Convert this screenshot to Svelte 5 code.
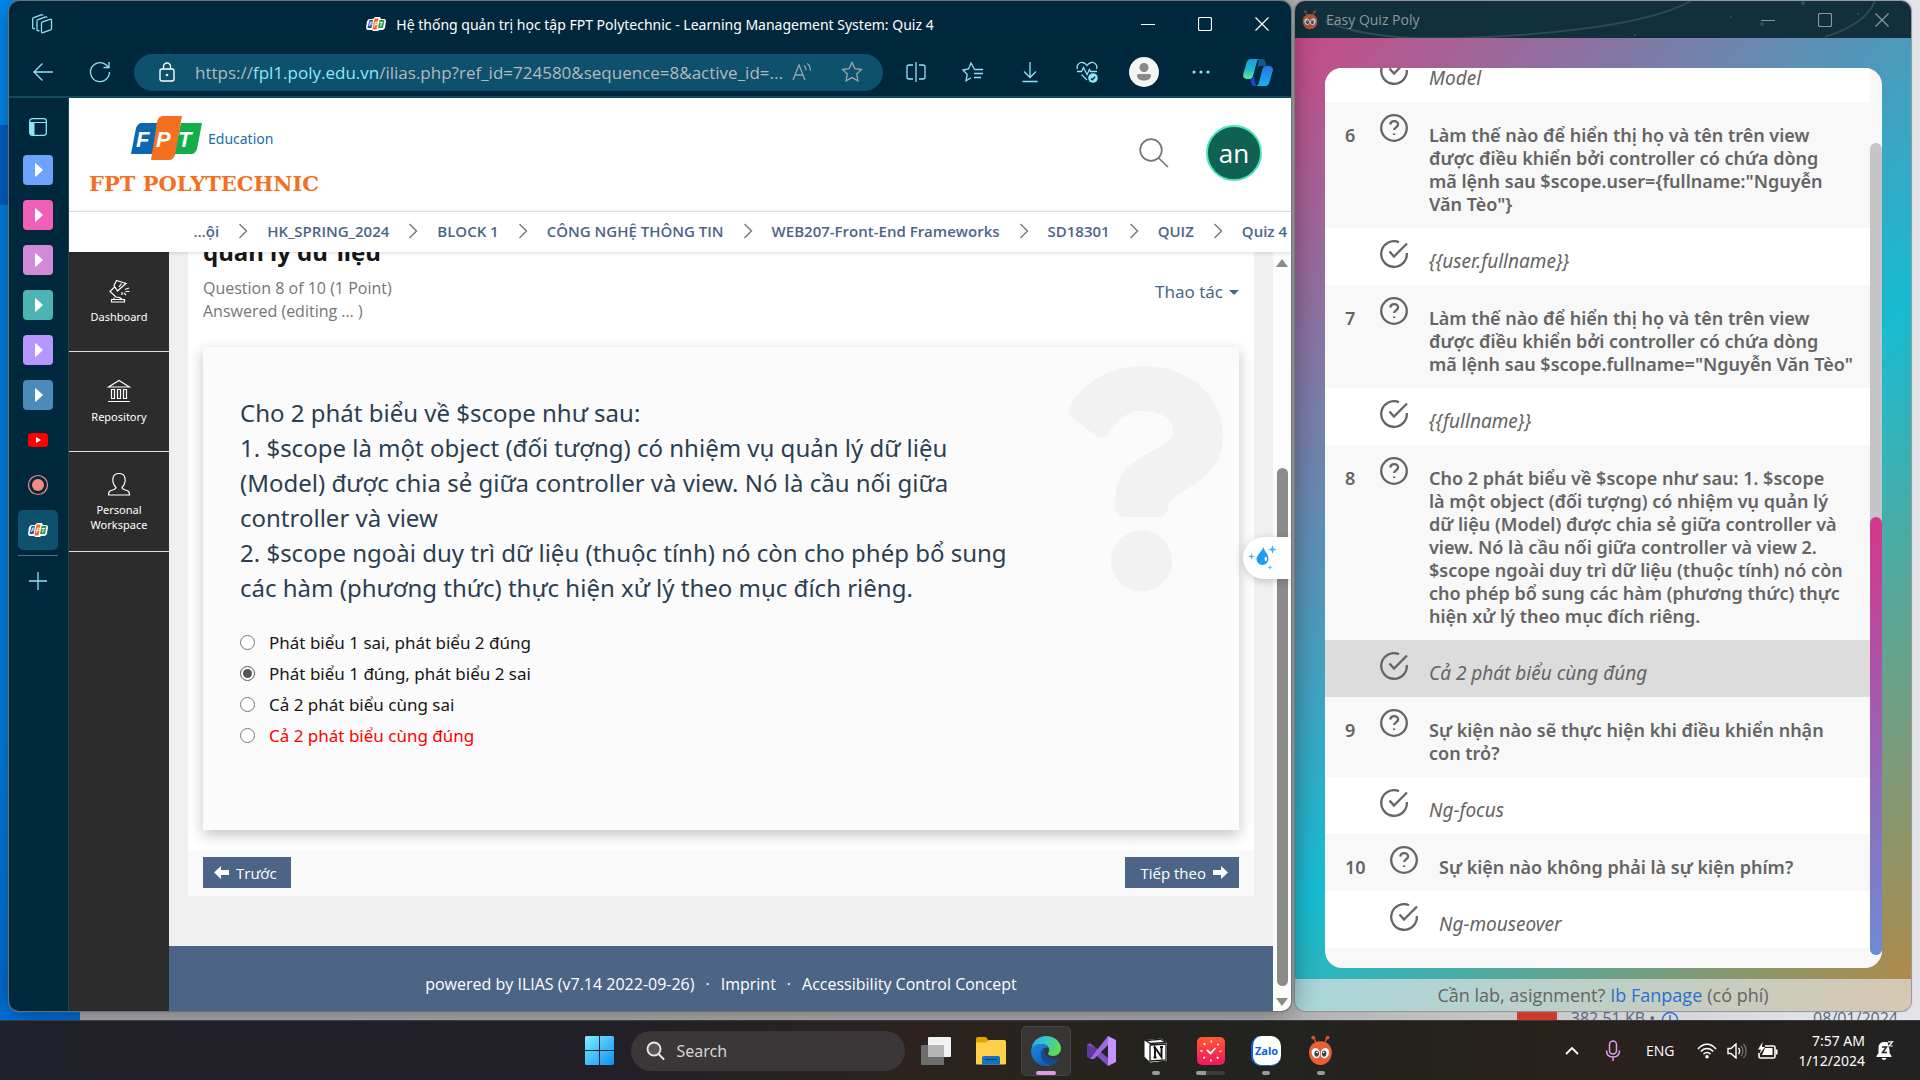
<script>
  const tiles = ['#6ea2ff', '#f060b8', '#d08ad8', '#4db4b6', '#b896ff', '#4c8abb'];
  const crumbs = ['…ội', 'HK_SPRING_2024', 'BLOCK 1', 'CÔNG NGHỆ THÔNG TIN', 'WEB207-Front-End Frameworks', 'SD18301', 'QUIZ', 'Quiz 4'];
  const options = [
    { text: 'Phát biểu 1 sai, phát biểu 2 đúng' },
    { text: 'Phát biểu 1 đúng, phát biểu 2 sai' },
    { text: 'Cả 2 phát biểu cùng sai' },
    { text: 'Cả 2 phát biểu cùng đúng', hint: true }
  ];
  let chosen = $state(1);
  const quiz = [
    { n: 5, a: 'Model' },
    { n: 6, q: 'Làm thế nào để hiển thị họ và tên trên view\nđược điều khiển bởi controller có chứa dòng\nmã lệnh sau $scope.user={fullname:"Nguyễn\nVăn Tèo"}', a: '{{user.fullname}}' },
    { n: 7, q: 'Làm thế nào để hiển thị họ và tên trên view\nđược điều khiển bởi controller có chứa dòng\nmã lệnh sau $scope.fullname="Nguyễn Văn Tèo"', a: '{{fullname}}' },
    { n: 8, q: 'Cho 2 phát biểu về $scope như sau: 1. $scope\nlà một object (đối tượng) có nhiệm vụ quản lý\ndữ liệu (Model) được chia sẻ giữa controller và\nview. Nó là cầu nối giữa controller và view 2.\n$scope ngoài duy trì dữ liệu (thuộc tính) nó còn\ncho phép bổ sung các hàm (phương thức) thực\nhiện xử lý theo mục đích riêng.', a: 'Cả 2 phát biểu cùng đúng', on: true },
    { n: 9, q: 'Sự kiện nào sẽ thực hiện khi điều khiển nhận\ncon trỏ?', a: 'Ng-focus' },
    { n: 10, q: 'Sự kiện nào không phải là sự kiện phím?', a: 'Ng-mouseover' }
  ];
</script>

{#snippet fptMini(w)}
  <svg width={w} height={w * 0.7} viewBox="0 0 20 14" aria-hidden="true">
    <path d="M3 2h4l2-2h5l1 2h4l1 2-1 7-2 2h-4l-1 1H7l-1-1H1l-1-2 1-7z" fill="#fff" />
    <path d="M3.500 3H7l-1.500 8H1.500z" fill="#1f4fa5" />
    <path d="M8.500 1.500h4l-2 11h-4z" fill="#f26b21" />
    <path d="M13.500 3h5L17 11h-5z" fill="#2b9c46" />
    <path d="M3.500 9 4.500 5h2M4 7h2M8.500 9.500l1-4.500h2l-.5 2.500H9M13.500 5.500h3.500M15.500 5.500l-.8 4" fill="none" stroke="#fff" stroke-width=".9" />
  </svg>
{/snippet}

{#snippet winButtons()}
  <div class="winbtns">
    <button aria-label="Minimize"><svg width="14" height="14" viewBox="0 0 14 14"><path d="M0 7.500h14" /></svg></button>
    <button aria-label="Maximize"><svg width="14" height="14" viewBox="0 0 14 14"><rect x=".5" y=".5" width="13" height="13" rx="1.500" /></svg></button>
    <button aria-label="Close"><svg width="14" height="14" viewBox="0 0 14 14"><path d="M.5.5l13 13M13.500.5l-13 13" /></svg></button>
  </div>
{/snippet}

{#snippet ant(h)}
  <svg width={h * 0.8} height={h} viewBox="0 0 24 30" aria-hidden="true">
    <path d="M8 9 6 3M16 9l2-6" stroke="#d8552f" stroke-width="1.400" />
    <circle cx="5" cy="2.500" r="1.800" fill="#d8552f" /><circle cx="19" cy="2.500" r="1.800" fill="#d8552f" />
    <path d="M12 6c7 0 11 5 11 11 0 7-5 12-11 12S1 24 1 17C1 11 5 6 12 6z" fill="#ea6035" />
    <ellipse cx="7.600" cy="17.500" rx="4" ry="5" fill="#fff" transform="rotate(-18 7.600 17.500)" />
    <ellipse cx="16.400" cy="17.500" rx="4" ry="5" fill="#fff" transform="rotate(18 16.400 17.500)" />
    <ellipse cx="8.400" cy="18" rx="2.200" ry="3" fill="#39424a" /><ellipse cx="15.600" cy="18" rx="2.200" ry="3" fill="#39424a" />
    <circle cx="8.800" cy="16.800" r=".9" fill="#fff" /><circle cx="15" cy="16.800" r=".9" fill="#fff" />
  </svg>
{/snippet}

<div class="desktop">
  <div class="behind" aria-hidden="true">
    <div class="blue"></div>
    <div class="chat"><i class="file"></i><span>382.51 KB • <svg width="18" height="18" viewBox="0 0 18 18"><circle cx="9" cy="9" r="7.500" fill="none" stroke="#2f6fd0" stroke-width="1.500" /><path d="M9 4v5l3 2" fill="none" stroke="#2f6fd0" stroke-width="1.500" /></svg></span><span class="date">08/01/2024</span></div>
  </div>

  <div class="stage">
    <section class="browser">
      <header class="chrome">
        <div class="titlebar">
          <button class="ws" aria-label="Workspaces">
            <svg width="22" height="22" viewBox="0 0 22 22"><path d="M10.500 10.200q0-1 1-1.400l7.500-2.500q1.500-.4 1.500 1v8.200q0 1-1 1.400l-7.500 2.800q-1.500.5-1.500-1zM8.500 17.500l-1.500.3q-1 .1-1-1V8q0-1 1-1.400l7.500-2.700q1.200-.3 1.500.8M4 15.500l-1 .1q-1.300.1-1.300-1V6q0-1 1-1.400l7.500-2.800Q11.800 1.400 12 2.500" /></svg>
          </button>
          <div class="wintitle">{@render fptMini(20)}<span>Hệ thống quản trị học tập FPT Polytechnic - Learning Management System: Quiz 4</span></div>
          {@render winButtons()}
        </div>
        <div class="toolbar">
          <button class="tool" aria-label="Back"><svg width="22" height="20" viewBox="0 0 22 20"><path d="M21 10H2M10.500 1.500 2 10l8.500 8.500" /></svg></button>
          <button class="tool" aria-label="Refresh"><svg width="22" height="22" viewBox="0 0 22 22"><path d="M20.500 11a9.500 9.500 0 1 1-3.500-7.300L19.500 6M20 1v5.500h-5.500" /></svg></button>
          <div class="address">
            <svg width="16" height="20" viewBox="0 0 16 20"><rect x="1" y="7" width="14" height="12" rx="2" fill="none" stroke="#fff" stroke-width="1.400" /><path d="M4.500 7V4.500a3.500 3.500 0 0 1 7 0V7" fill="none" stroke="#fff" stroke-width="1.400" /><circle cx="8" cy="13" r="1.300" fill="#fff" /></svg>
            <span class="url">https://<b>fpl1.poly.edu.vn</b>/ilias.php?ref_id=724580&amp;sequence=8&amp;active_id=...</span>
            <button aria-label="Read aloud"><svg width="20" height="20" viewBox="0 0 20 20"><path d="M1 18 7 3l6 15M3 13h8M12 3.500c1.500 1 2 3 2 5M15 1.500c2.500 1.500 3.500 4.500 3.500 7" /></svg></button>
            <button aria-label="Favourite"><svg width="22" height="22" viewBox="0 0 22 22"><path d="m11 1.500 2.900 6.100 6.600.9-4.800 4.600 1.200 6.700L11 16.600l-5.900 3.200 1.200-6.700L1.500 8.500l6.600-.9z" /></svg></button>
          </div>
          <button class="tool" aria-label="Split screen"><svg width="20" height="20" viewBox="0 0 20 20"><path d="M7 3H3a2 2 0 0 0-2 2v10a2 2 0 0 0 2 2h4M13 3h4a2 2 0 0 1 2 2v10a2 2 0 0 1-2 2h-4M10 0v20" /></svg></button>
          <button class="tool" aria-label="Favourites"><svg width="22" height="20" viewBox="0 0 22 20"><path d="M12.500 7.500 9 1 6.500 7 1 8l4.200 4.400L4 18.800l5-3M12.500 7.500H21M12 11.500h9M12 15.500h7" /></svg></button>
          <button class="tool" aria-label="Downloads"><svg width="20" height="22" viewBox="0 0 20 22"><path d="M10 1v15M4 10.500l6 6 6-6M2.500 20.500h15" /></svg></button>
          <button class="tool" aria-label="Browser essentials"><svg width="22" height="22" viewBox="0 0 22 22"><path d="M1.500 8C0 4 3.500 1.200 6.500 1.500 9 1.700 10 3 11 4.500c1-1.500 2-2.800 4.500-3C18.500 1.200 22 4 20.500 8M1 10.500h4.500l2-4 3.500 7 2.500-5 1 2H21M5.500 13.500l5.500 5.500" /><circle cx="17" cy="17" r="4.800" class="solid" /><path d="m15 17.500 1.300 1.300 2.700-3" class="cut" /></svg></button>
          <button class="tool" aria-label="Profile"><svg width="30" height="30" viewBox="0 0 30 30" class="prof"><circle cx="15" cy="15" r="15" fill="#f5f5f5" /><circle cx="15" cy="10.500" r="4.500" fill="#8a8886" /><path d="M9.500 17h11q1.500 0 1.500 1.500c0 3.500-3 5-7 5s-7-1.500-7-5Q8 17 9.500 17z" fill="#8a8886" /></svg></button>
          <button class="tool" aria-label="Settings and more"><svg width="18" height="4" viewBox="0 0 18 4"><circle cx="2" cy="2" r="1.600" class="solid" /><circle cx="9" cy="2" r="1.600" class="solid" /><circle cx="16" cy="2" r="1.600" class="solid" /></svg></button>
          <button class="tool copilot" aria-label="Copilot">
            <svg width="30" height="27" viewBox="0 0 30 27">
              <defs><linearGradient id="cpa" x1="0" y1="0" x2="0" y2="1"><stop offset="0" stop-color="#139ddd" /><stop offset=".5" stop-color="#22b6d8" /><stop offset="1" stop-color="#62e88e" /></linearGradient><linearGradient id="cpb" x1="0" y1="1" x2="0" y2="0"><stop offset="0" stop-color="#14b4f8" /><stop offset="1" stop-color="#2c6fe0" /></linearGradient></defs>
              <path d="M16 0h3c2 0 3 1 3.500 3l1 4H18c-2 0-3 1-3.500 3z" fill="#0b5c94" />
              <path d="M8 0h9c-2 0-3 2-3.500 4L10 17c-.6 2-1.500 3-3.500 3H4c-3 0-4.500-2-3.700-5L3.500 4C4.200 1.500 5.500 0 8 0z" fill="url(#cpa)" />
              <path d="M13 27h-2c-1.500 0-2.300-1-2.700-2.500L7.500 20c2-.3 3-1.500 3.500-3.500z" fill="#1a44d8" />
              <path d="M22 27h-9.500c2 0 3-1.500 3.500-3.500L19.500 10c.6-2 1.500-3 3.500-3h3c3 0 4.500 2 3.700 5L26.500 23c-.7 2.500-2 4-4.500 4z" fill="url(#cpb)" />
            </svg>
          </button>
        </div>
      </header>

      <div class="under">
        <nav class="tabs" aria-label="Tabs">
          <button class="slot first" aria-label="Tab actions"><svg width="18" height="18" viewBox="0 0 18 18"><rect x=".7" y=".7" width="16.600" height="16.600" rx="2.500" fill="none" stroke="#8fe3fa" stroke-width="1.300" /><path d="M1 4.500h16" stroke="#8fe3fa" stroke-width="1.200" /><path d="M1 5h4.500v12H2.500L1 15.500z" fill="#8fe3fa" /></svg></button>
          {#each tiles as c}
            <button class="slot" aria-label="Pinned tab"><svg width="30" height="30" viewBox="0 0 30 30"><rect width="30" height="30" rx="4" fill={c} /><path d="M13 8.500c-.6-.6-1-.3-1 .5v12c0 .8.4 1.100 1 .5l6.500-6c.6-.5.600-.5 0-1z" fill="#fff" /></svg></button>
          {/each}
          <button class="slot" aria-label="YouTube"><svg width="20" height="14" viewBox="0 0 20 14"><rect width="20" height="14" rx="3.500" fill="#f00" /><path d="M8 4v6l5-3z" fill="#fff" /></svg></button>
          <button class="slot" aria-label="Recorder"><svg width="22" height="22" viewBox="0 0 22 22"><circle cx="11" cy="11" r="9.500" fill="none" stroke="#f28b82" stroke-width="1.200" /><circle cx="11" cy="11" r="6" fill="#f28b82" /></svg></button>
          <button class="slot current" aria-label="Quiz 4">{@render fptMini(20)}</button>
          <hr />
          <button class="slot" aria-label="New tab"><svg width="18" height="18" viewBox="0 0 18 18"><path d="M9 0v18M0 9h18" stroke="#8fe3fa" stroke-width="1.300" /></svg></button>
        </nav>

        <div class="page">
          <header class="sitehead">
            <a href="#home" class="logo">
              <span class="logotop">
                <svg width="72" height="46" viewBox="0 0 72 46" aria-hidden="true">
                  <path d="M11 7h17l-6 31H0L5 12c1-3 3-5 6-5z" fill="#0b67b2" />
                  <path d="M50 7h21l-5 26c-1 3-3 5-6 5H43z" fill="#12ae4b" />
                  <path d="M32 0h19l-7 39c-1 3-3 5-6 5H20l6-38c1-4 3-6 6-6z" fill="#f37021" />
                  <text x="5" y="31">F</text><text x="25" y="31">P</text><text x="47" y="31">T</text>
                </svg>
                <span class="edu">Education</span>
              </span>
              <strong>FPT POLYTECHNIC</strong>
            </a>
            <button class="find" aria-label="Search"><svg width="30" height="30" viewBox="0 0 30 30"><circle cx="12" cy="12" r="10.800" fill="none" stroke="#757575" stroke-width="1.700" /><path d="m19.500 20 9.500 9" stroke="#757575" stroke-width="1.700" /></svg></button>
            <button class="me">an</button>
          </header>
          <nav class="crumbs" aria-label="Breadcrumb">
            {#each crumbs as c, i}
              {#if i}<svg width="10" height="16" viewBox="0 0 10 16" aria-hidden="true"><path d="m1.500 1 7 7-7 7" fill="none" stroke="#777" stroke-width="1.400" /></svg>{/if}
              <a href="#crumb">{c}</a>
            {/each}
          </nav>

          <div class="body">
            <nav class="side" aria-label="Main">
              <a href="#dashboard"><svg width="24" height="24" viewBox="0 0 24 24"><path d="M4.500 20.500h13v2.500h-13zM7 20.500v-2M15 20.500C14 18 11.500 18.500 9 18L3 12.500 8 7.500M9.500 1.500 19 4.500l-3.500 3-5 4.500-3.500-5.500zM12 8l2.500-3.500M15 16v-3M19 16l-2-2M18 10.500l4-1.500M18.500 12.500h4" /></svg><span>Dashboard</span></a>
              <a href="#repository"><svg width="24" height="24" viewBox="0 0 24 24"><path d="M1.500 8 12 1.500 22.500 8zM4.500 10.500h3v9h-3zM10.500 10.500h3v9h-3zM16.500 10.500h3v9h-3zM1 22.500h22" /></svg><span>Repository</span></a>
              <a href="#workspace"><svg width="24" height="24" viewBox="0 0 24 24"><path d="M9 15.500C6.500 13 5.500 9.500 6 6c.5-3 3-4.500 6-4.500S17.500 3 18 6c.5 3.500-.5 7-3 9.500 0 1 .5 1.500 2 2l3.500 1.200c1.500.5 2 1.500 2 4.300h-21c0-2.800.5-3.800 2-4.300L7 17.500c1.500-.5 2-1 2-2z" /></svg><span>Personal<br />Workspace</span></a>
            </nav>
            <main>
              <article>
                <div class="qhead">
                  <div>
                    <h1>quản lý dữ liệu</h1>
                    <p>Question 8 of 10 (1 Point)<br />Answered (editing … )</p>
                  </div>
                  <button class="actions">Thao tác <i></i></button>
                </div>
                <form class="card">
                  <div class="qtext">
                    Cho 2 phát biểu về $scope như sau:<br />
                    1. $scope là một object (đối tượng) có nhiệm vụ quản lý dữ liệu (Model) được chia sẻ giữa controller và view. Nó là cầu nối giữa controller và view<br />
                    2. $scope ngoài duy trì dữ liệu (thuộc tính) nó còn cho phép bổ sung các hàm (phương thức) thực hiện xử lý theo mục đích riêng.
                  </div>
                  <div class="opts">
                    {#each options as o, i}
                      <label class:hint={o.hint}><input type="radio" name="answer" value={i} bind:group={chosen} /><span>{o.text}</span></label>
                    {/each}
                  </div>
                  <svg class="mark" width="156" height="226" viewBox="0 0 156 226" aria-hidden="true">
                    <path d="M3 38C20 12 46 0 76 0c46 0 79 32 79 68 0 34-21 46-44 60-10 6-11 9-11 14 0 5-4 9-10 9H57c-6 0-10-4-10-10 0-24 4-38 30-52 20-11 28-15 28-24 0-12-12-20-31-20-14 0-22 7-32 20-4 6-9 8-14 5L6 53c-6-4-7-9-3-15z" />
                    <circle cx="73.500" cy="195" r="30.500" />
                  </svg>
                </form>
              </article>
              <div class="pager">
                <button><svg width="15" height="13" viewBox="0 0 15 13"><path d="M0 6.500 7 0v4h8v5H7v4z" /></svg>Trước</button>
                <button class="next">Tiếp theo<svg width="15" height="13" viewBox="0 0 15 13"><path d="M15 6.500 8 0v4H0v5h8v4z" /></svg></button>
              </div>
              <footer>powered by ILIAS (v7.14 2022-09-26)<i>·</i><a href="#imprint">Imprint</a><i>·</i><a href="#access">Accessibility Control Concept</a></footer>
            </main>
            <div class="scroll" aria-hidden="true"><i class="up"></i><i class="gap"></i><i class="thumb"></i><i class="down"></i></div>
            <button class="drop" aria-label="Assistant">
              <svg width="30" height="24" viewBox="0 0 30 24"><path d="M15.500 1c1 5 5 7 5 12a6 6 0 0 1-12 0c0-4 5-7 7-12z" fill="#1c9cf2" /><ellipse cx="17.800" cy="13" rx="1.200" ry="2.200" fill="#fff" /><path d="m3.500 7 .8 2.700 2.700.8-2.700.8-.8 2.700-.8-2.700L0 10.500l2.700-.8zM24.500-1l1.100 3.400L29 3.500l-3.400 1.100L24.500 8l-1.100-3.400L20 3.500l3.400-1.100zM22 19l.6 1.900 1.900.6-1.900.6L22 24l-.6-1.900-1.900-.6 1.900-.6z" fill="#3cb4fb" /></svg>
            </button>
          </div>
        </div>
      </div>
    </section>

    <section class="quiz">
      <header>
        <svg class="arcs" viewBox="0 0 616 37" preserveAspectRatio="none" aria-hidden="true"><path d="M30 20C70 38 130 40 210 35S360 20 396 0M530 36c25-8 44-20 50-36" /><g><circle cx="508" cy="2" r="2" /><circle cx="467" cy="23" r="2" /><circle cx="436" cy="16" r="1" /><circle cx="340" cy="34" r="1" /><circle cx="563" cy="13" r="1" /></g></svg>
        <span class="name">{@render ant(20)}Easy Quiz Poly</span>
        {@render winButtons()}
      </header>
      <div class="panel">
        <div class="list">
          <ol>
            {#each quiz as item}
              {#if item.q}
                <li class="q">
                  <span class="num" class:two={item.n > 9}>{item.n}</span>
                  <svg width="28" height="28" viewBox="0 0 28 28" aria-hidden="true"><circle cx="14" cy="14" r="12.800" /><path d="M10.200 10.500c.4-2.200 2-3.300 4-3.300 2.200 0 3.900 1.400 3.900 3.400 0 2.700-4 2.900-4 5.400M14.100 19.500v1.500" /></svg>
                  <strong>{item.q}</strong>
                </li>
              {/if}
              <li class="a" class:on={item.on}>
                <span class="num" class:two={item.n > 9}></span>
                <svg width="28" height="28" viewBox="0 0 28 28" aria-hidden="true"><path d="M19 2.200A12.800 12.800 0 1 0 26.800 13M9.500 11.500l4.500 5L27 3.500" /></svg>
                <em>{item.a}</em>
              </li>
            {/each}
          </ol>
          <div class="track" aria-hidden="true"><i></i></div>
        </div>
      </div>
      <footer>Cần lab, asignment? <a href="#fanpage">Ib Fanpage</a> (có phí)</footer>
    </section>
  </div>

  <div class="taskbar">
    <div class="apps">
      <button class="app" aria-label="Start"><svg width="29" height="29" viewBox="0 0 29 29"><defs><linearGradient id="win" x1="0" y1="0" x2="1" y2="1"><stop offset="0" stop-color="#7df0ff" /><stop offset="1" stop-color="#0a90f5" /></linearGradient></defs><path d="M1 0h13v14H0V1zM15 0h13l1 1v13H15zM0 15h14v14H1l-1-1zM15 15h14v13l-1 1H15z" fill="url(#win)" /></svg></button>
      <label class="search"><svg width="19" height="19" viewBox="0 0 19 19" aria-hidden="true"><circle cx="8" cy="8" r="6.500" fill="#55545a" stroke="#e8e8e8" stroke-width="1.900" /><path d="m12.500 13 5 5" stroke="#e8e8e8" stroke-width="2" stroke-linecap="round" /></svg><input type="text" placeholder="Search" aria-label="Search" /></label>
      <button class="app" aria-label="Task view"><svg width="30" height="28" viewBox="0 0 30 28"><rect x="7" width="23" height="20" rx="1" fill="#f2f2f2" /><rect y="8" width="23" height="20" rx="1" fill="#777" opacity=".9" /><rect x="7" y="8" width="16" height="12" fill="#b5b5b5" /></svg></button>
      <button class="app" aria-label="File Explorer"><svg width="30" height="28" viewBox="0 0 30 28"><path d="M0 2C0 .7.700 0 2 0h8l3 4v4H0z" fill="#e5a000" /><path d="M0 5.500h10L13 3h15c1.300 0 2 .7 2 2v21c0 1-.7 1.500-1.500 1.500h-27C.5 27.500 0 27 0 26z" fill="#ffd04a" /><path d="M6 27.500V21c0-1.300.7-2 2-2h14c1.300 0 2 .7 2 2v6.500z" fill="#1273c4" /><path d="M9 22.500h12" stroke="#0b3a66" stroke-width="1.200" /></svg></button>
      <button class="app active" aria-label="Microsoft Edge">
        <svg width="30" height="30" viewBox="0 0 30 30"><defs><linearGradient id="eda" x1="0" y1="0" x2="1" y2=".4"><stop offset="0" stop-color="#2ba8e8" /><stop offset=".5" stop-color="#38c6d0" /><stop offset="1" stop-color="#5edb50" /></linearGradient><linearGradient id="edb" x1="0" y1="0" x2=".5" y2="1"><stop offset="0" stop-color="#1a8be0" /><stop offset="1" stop-color="#0f5fb4" /></linearGradient></defs>
          <path d="M.500 13C1.500 5 7.500 0 15 0c8.500 0 15 6 15 12.500 0 4.500-3.500 7.500-8 7.500-3 0-5-1-5-2.500 0-1 1.200-1.500 1.200-3.800C18.200 10.500 15 8 10.500 8 5.500 8 2 10 .5 13z" fill="url(#eda)" />
          <path d="M0 15C0 10.500 4.500 8 10 8c3.500 0 6 1.500 7.200 3.500C13 11 10 14 10 18c0 6 5 10.500 11 10.800-2 .9-4 1.200-6 1.200C7 30 0 23.500 0 15z" fill="url(#edb)" />
          <path d="M10 18c0-3 1.500-5.200 3.500-6.300-1.200 6.300 3.500 11.800 10.500 11.800 1.800 0 3-.5 4-1 .5-.2.700.2.400.6C26.500 26 24 28 21 28.800 15 28.500 10 24 10 18z" fill="#124c96" />
        </svg><i class="bar"></i>
      </button>
      <button class="app" aria-label="Visual Studio"><svg width="30" height="30" viewBox="0 0 30 30"><path d="M1 9 4 7l18 15v8L1 11z" fill="#7d4fc0" /><path d="M1 9v12l3 2 6-6V12z" fill="#5d3a9c" /><path d="M4 23 22 0v9L8 23l-4 0z" fill="#9b6be0" /><path d="M22 0l8 4v22l-8 4z" fill="#c394ff" /></svg></button>
      <button class="app" aria-label="Notion"><svg width="26" height="27" viewBox="0 0 26 27"><path d="M1 2.500 18 1l6.500 4.500V24L7.500 26 1 20z" fill="#fff" stroke="#1a1a1a" /><path d="M2.500 3.500 17.500 2.300 22.500 5.300 7.500 6.500zM7 8l16-1v16L7 24z" fill="#fff" stroke="#1a1a1a" stroke-width="1.300" /><path d="M10.500 20.500h3M12 20.500v-10l6.500 9.500v-10M10.500 10.500h2M17 10h3" fill="none" stroke="#111" stroke-width="1.900" /></svg><i class="dot"></i></button>
      <button class="app" aria-label="Clock"><svg width="28" height="28" viewBox="0 0 28 28"><defs><linearGradient id="ck" x1="0" y1="0" x2="0" y2="1"><stop offset="0" stop-color="#ff5a2e" /><stop offset="1" stop-color="#f5145f" /></linearGradient></defs><rect width="28" height="28" rx="5" fill="url(#ck)" /><circle cx="14" cy="14" r="9.500" fill="none" stroke="#fff" stroke-width="2.200" stroke-dasharray="1.600 5.860" stroke-dashoffset=".8" /><path d="m10 13 3.500 3.500 5-5.500" fill="none" stroke="#fff" stroke-width="1.800" /></svg><i class="part"></i></button>
      <button class="app" aria-label="Zalo"><span class="zalo">Zalo</span><i class="dot"></i></button>
      <button class="app" aria-label="Easy Quiz Poly">{@render ant(31)}<i class="dot"></i></button>
    </div>
    <div class="tray">
      <button aria-label="Hidden icons"><svg width="16" height="16" viewBox="0 0 16 16"><path d="m2 11 6-6 6 6" fill="none" stroke="#fff" stroke-width="1.800" /></svg></button>
      <button aria-label="Microphone"><svg width="16" height="22" viewBox="0 0 16 22"><rect x="4.500" y="1" width="7" height="13" rx="3.500" fill="none" stroke="#d9a0e0" stroke-width="1.500" /><path d="M1.500 10.500c0 4 2.500 6.500 6.500 6.500s6.500-2.500 6.500-6.500M8 17v4" fill="none" stroke="#d9a0e0" stroke-width="1.500" /></svg></button>
      <button class="lang">ENG</button>
      <button class="sys" aria-label="Network, volume, battery">
        <svg width="20" height="16" viewBox="0 0 20 16"><path d="M1 6C6-.5 14-.5 19 6M3.800 8.600c3.500-4.200 8.900-4.200 12.400 0M6.500 11.200c2-2.300 5-2.300 7 0" fill="none" stroke="#fff" stroke-width="1.500" /><circle cx="10" cy="13.700" r="1.800" fill="#fff" /></svg>
        <svg width="20" height="16" viewBox="0 0 20 16"><path d="M1 5.500h3L9 1v14l-5-4.500H1zM11.500 5c1.500 1.500 1.500 4.500 0 6" fill="none" stroke="#fff" stroke-width="1.400" /><path d="M14 3c2.500 2.500 2.500 7.500 0 10M16.500 1c3.500 3.500 3.500 10.500 0 14" fill="none" stroke="#777" stroke-width="1.200" /></svg>
        <svg width="21" height="18" viewBox="0 0 21 18"><path d="M8 4h8.500c1 0 1.500.5 1.500 1.500v9c0 1-.5 1.500-1.500 1.500h-13C2.500 16 2 15.500 2 14.500V11" fill="none" stroke="#fff" stroke-width="1.600" /><path d="M5 13h10.500V6H8zM19 7.500h1.500v5H19z" fill="#fff" /><path d="M5.500 0 1 7.500h3L2.500 12 8 5H5z" fill="#fff" /></svg>
      </button>
      <button class="clock">7:57 AM<br />1/12/2024</button>
      <button aria-label="Notifications"><svg width="18" height="20" viewBox="0 0 18 20"><path d="M8 1C4 1 2.500 4 2.500 7v5L.5 15v1h15v-1l-2-3V9l-2-8zM5.500 17a2.600 2.600 0 0 0 5 0z" fill="#fff" /><path d="M11 0h6l-3.500 5H17M6 6h4.500L6.500 11.500H11" fill="none" stroke="#222" stroke-width="1.500" /><path d="M12 .8h4.500L12.800 5h4" fill="none" stroke="#fff" stroke-width="1.200" /></svg></button>
    </div>
  </div>
</div>

<style>
  :global(body) { margin: 0; }
  * { box-sizing: border-box; }
  button { border: 0; background: none; padding: 0; font: inherit; color: inherit; display: flex; align-items: center; justify-content: center; }
  a { color: inherit; text-decoration: none; }
  svg { flex: none; display: block; }
  .desktop { height: 100vh; display: flex; flex-direction: column; position: relative; overflow: hidden; background: #b9b9b9; font-family: "Open Sans", "Noto Sans", sans-serif; }
  .behind { position: absolute; inset: 0 0 60px 0; display: flex; flex-direction: column; justify-content: flex-end; background: linear-gradient(90deg, #b4b4b4 68%, #e3e4e8 95%); }
  .blue { position: absolute; left: 0; top: 0; bottom: 0; width: 80px; background: linear-gradient(#018cf5 0 125px, #0062cc 125px 205px, #0286ec 205px 700px, #0070dc); }
  .chat { display: flex; align-items: flex-start; height: 9px; overflow: visible; padding: 0 22px 0 79%; color: #56687c; font-size: 16px; line-height: 14px; }
  .chat .file { width: 40px; height: 9px; background: #cf3b2b; }
  .chat span { display: flex; gap: 6px; margin-left: 14px; }
  .chat .date { margin-left: auto; }

  .stage { position: relative; flex: 1; min-height: 0; display: flex; gap: 4px; padding: 1px 9px 9px; }
  .browser { flex: 1282; min-width: 0; z-index: 1; display: flex; flex-direction: column; background: #00283c; border-radius: 10px; box-shadow: 0 0 1px 1px #6b7378, 0 2px 28px rgba(0, 0, 0, .45); overflow: hidden; }
  .chrome { flex: none; height: 97px; border-bottom: 2px solid #124a60; }
  .titlebar { display: grid; grid-template-columns: 1fr auto 1fr; align-items: center; height: 46px; color: #fff; }
  .ws { justify-self: start; margin-left: 22px; }
  .ws svg, .tool svg { fill: none; stroke: #8fe3fa; stroke-width: 1.300; }
  .wintitle { display: flex; align-items: center; gap: 10px; font: 14px "Noto Sans", sans-serif; }
  .winbtns { justify-self: end; display: flex; padding-right: 1px; }
  .winbtns button { width: 57px; height: 38px; }
  .winbtns svg { fill: none; stroke: currentColor; stroke-width: 1.200; }
  .toolbar { display: flex; align-items: center; height: 50px; padding: 0 5px; }
  .tool { width: 57px; height: 40px; }
  .tool .solid { fill: #8fe3fa; stroke: none; }
  .tool .cut { stroke: #00283c; }
  .tool .prof, .copilot svg { stroke: none; }
  .address { flex: 1; min-width: 0; display: flex; align-items: center; height: 37px; margin: 0 4px 0 6px; padding: 0 20px 0 25px; border-radius: 19px; background: #0d516d; color: #b5b9bb; }
  .url { flex: 1; min-width: 0; margin-left: 20px; white-space: nowrap; font-size: 17px; }
  .url b { font-weight: 400; color: #8fe8fd; }
  .address button { margin-left: 29px; }
  .address button svg { fill: none; stroke: #9aa7ad; stroke-width: 1.300; }

  .under { flex: 1; min-height: 0; display: flex; }
  .tabs { flex: none; width: 60px; display: flex; flex-direction: column; align-items: center; gap: 5px; padding: 10px 2px 0 0; border-right: 1px solid #124a60; }
  .slot { flex: none; width: 40px; height: 40px; border-radius: 5px; }
  .slot.first { height: 37px; }
  .slot.current { background: #0d516d; }
  .tabs hr { width: 40px; height: 1px; margin: 0; border: 0; background: #4f7685; }

  .page { flex: 1; min-width: 0; display: flex; flex-direction: column; background: #fff; border-radius: 0 0 8px 0; }
  .sitehead { flex: none; height: 113px; display: flex; align-items: center; padding: 0 29px 4px 20px; }
  .logo { display: flex; flex-direction: column; margin-right: auto; padding-top: 6px; color: #f37021; }
  .logotop { display: flex; align-items: center; gap: 5px; padding-left: 42px; color: #1a6bb0; }
  .logotop text { font: italic 700 22px "Liberation Sans", sans-serif; fill: #fff; }
  .edu { font: 14px/20px "Noto Sans", sans-serif; }
  .logo strong { margin-top: 10px; font: 700 21px/24px "DejaVu Serif", serif; }
  .find { width: 30px; height: 30px; margin-right: 37px; }
  .me { width: 56px; height: 56px; border-radius: 50%; border: 2px solid #4fe3bd; background: #0f6152; color: #fff; font-size: 26px; line-height: 30px; }
  .crumbs { flex: none; height: 41px; display: flex; align-items: center; justify-content: flex-end; gap: 19px; padding: 0 4px 2px 0; border-top: 1px solid #ddd; color: #4c6586; font-size: 15px; font-weight: 600; white-space: nowrap; z-index: 1; box-shadow: 0 1px 4px rgba(0, 0, 0, .15); background: #fff; }

  .body { flex: 1; min-height: 0; display: flex; position: relative; }
  .side { flex: none; width: 100px; background: #2c2c2c; }
  .side a { display: flex; flex-direction: column; align-items: center; justify-content: center; gap: 6px; height: 100px; border-bottom: 1px solid #ddd; color: #fff; font: 11px/15px "Noto Sans", sans-serif; text-align: center; }
  .side svg { fill: none; stroke: #fff; stroke-width: 1.200; }
  main { flex: 1; min-width: 0; display: flex; flex-direction: column; justify-content: flex-end; overflow: hidden; background: #f0f0f0; color: #161616; }
  article { flex: none; margin: 0 19px; padding: 0 15px 20px; background: #fff; }
  .qhead { display: flex; justify-content: space-between; align-items: flex-end; padding-bottom: 24px; }
  h1 { margin: 0; font: 700 24px/34px "Noto Sans", sans-serif; }
  p { margin: 8px 0 0; font-size: 16px; line-height: 23px; color: #757575; }
  .actions { margin-bottom: 19px; gap: 6px; font: 17px/24px "Noto Sans", sans-serif; color: #4c6586; }
  .actions i { border: 5px solid transparent; border-top-color: #4c6586; border-bottom: 0; }
  .card { position: relative; min-height: 483px; padding: 48px 37px; background: #fbfbfb; box-shadow: 0 5px 14px rgba(0, 0, 0, .24); font-family: "Noto Sans", sans-serif; }
  .qtext { width: 82%; font-size: 24px; line-height: 35px; color: #2c3e50; }
  .opts { margin-top: 22px; font-size: 17px; }
  .opts label { display: flex; align-items: center; gap: 14px; height: 31px; }
  .opts input { margin: 0; width: 15px; height: 15px; accent-color: #555; }
  .hint { color: #f00; }
  .mark { position: absolute; right: 15px; top: 19px; fill: #f2f2f2; }
  .pager { flex: none; display: flex; justify-content: space-between; margin: 0 19px 50px; padding: 7px 15px 8px; background: #f9f9f9; }
  .pager button { height: 31px; padding: 0 14px 0 11px; gap: 7px; background: #4c6586; color: #fff; font-size: 15px; }
  .pager .next { padding: 0 11px 0 15px; }
  .pager svg { fill: #fff; }
  main footer { flex: none; display: flex; align-items: center; justify-content: center; gap: 11px; height: 65px; padding-top: 11px; background: #4c6586; color: #fff; font-size: 16px; }
  main footer i { font-style: normal; }
  .scroll { flex: none; width: 18px; display: flex; flex-direction: column; align-items: center; background: #fcfcfc; padding: 7px 0 5px; }
  .scroll .up { border: 6px solid transparent; border-top: 0; border-bottom: 8px solid #8b8b8b; }
  .scroll .gap { flex: 201; }
  .scroll .thumb { flex: 518; width: 11px; margin-bottom: 12px; border-radius: 6px; background: #8b8b8b; }
  .scroll .down { border: 6px solid transparent; border-bottom: 0; border-top: 8px solid #8b8b8b; }
  .drop { position: absolute; right: 0; top: 285px; width: 48px; height: 42px; padding-right: 8px; border-radius: 21px 0 0 21px; background: #fff; box-shadow: 0 2px 8px rgba(0, 0, 0, .2); }
  .drop svg { overflow: visible; }

  .quiz { flex: 616; min-width: 0; display: flex; flex-direction: column; border-radius: 10px; overflow: hidden; background: linear-gradient(135deg, #d04685, #17bcd2 56%, #b78844); box-shadow: 0 0 1px 1px #8d9296; color: #646464; }
  .quiz header { position: relative; flex: none; height: 37px; display: flex; align-items: center; justify-content: space-between; padding-left: 7px; background: #12303c; color: #8b989e; }
  .quiz .winbtns { position: relative; color: #8b989e; }
  .arcs { position: absolute; inset: 0; width: 100%; height: 37px; fill: none; stroke: #2d4a55; stroke-width: 2; }
  .arcs g { fill: #1d5670; stroke: none; }
  .name { position: relative; display: flex; align-items: center; gap: 8px; font-size: 14px; }
  .name svg { opacity: .75; }
  .panel { flex: 1; min-height: 0; display: flex; padding: 30px 29px 11px 30px; }
  .list { flex: 1; min-width: 0; display: flex; overflow: hidden; border-radius: 17px; background: #f8f8f8; }
  ol { flex: 1; min-width: 0; display: flex; flex-direction: column; justify-content: flex-end; margin: 0; padding: 0 0 20px; list-style: none; font: 18px/23px "Trebuchet MS", "Noto Sans", sans-serif; }
  li { flex: none; display: flex; align-items: flex-start; padding: 22px 0 12px 20px; }
  li.a { background: #fff; }
  li.a.on { background: #dcdcdc; }
  .num { flex: none; width: 10px; margin-right: 25px; font-weight: 600; }
  .num.two { width: 20px; }
  li svg { margin: -10px 21px -18px 0; fill: none; stroke: #646464; stroke-width: 2.300; }
  li strong { font-weight: 600; white-space: pre-line; }
  li em { font-size: 19px; }
  .track { flex: none; width: 12px; margin: 75px 0 13px; border-radius: 6px; background: #c5c4c6; display: flex; align-items: flex-end; }
  .track i { width: 12px; height: 54%; border-radius: 6px; background: linear-gradient(#d6368a, #a05cb0 45%, #6e8bd6); }
  .quiz footer { flex: none; height: 32px; display: flex; align-items: center; justify-content: center; gap: 5px; background: rgba(230, 230, 230, .68); color: #646464; font-size: 18px; line-height: 24px; }
  .quiz footer a { color: #2a6fd2; }

  .taskbar { position: relative; z-index: 2; flex: none; height: 60px; display: grid; grid-template-columns: 1fr auto 1fr; align-items: center; border-top: 1px solid #3a3a3c; background: linear-gradient(90deg, #20202a, #222026 33%, #2c231f 48%, #22231f 65%, #29211c 84%, #222); color: #fff; }
  .apps { grid-column: 2; display: flex; align-items: center; gap: 5px; }
  .app { position: relative; width: 50px; height: 50px; border-radius: 5px; }
  .app.active { background: #373634; border: 1px solid #444; }
  .search { display: flex; align-items: center; gap: 12px; width: 274px; height: 40px; padding: 0 15px; margin: 0 1px; border-radius: 20px; background: #3b3739; }
  .search input { min-width: 0; flex: 1; border: 0; padding: 0; background: none; outline: 0; color: #ddd; font: 16px "Noto Sans", sans-serif; }
  .search input::placeholder { color: #d6d4d4; opacity: 1; }
  .app i { position: absolute; bottom: 1px; height: 4px; width: 8px; border-radius: 2px; background: #9a9a9a; }
  .app .bar { bottom: 0; width: 20px; background: #dc9ce4; }
  .app .part { width: 29px; background: linear-gradient(90deg, #9a9a9a 10px, #3a3a3a 10px); }
  .zalo { display: flex; align-items: center; justify-content: center; width: 30px; height: 30px; border-radius: 10px; background: #fff; border-left: 2px solid #0b5fe8; border-bottom: 1px solid #0b5fe8; color: #0b5fe8; font: 700 11px "Open Sans", sans-serif; }
  .tray { justify-self: end; display: flex; align-items: center; padding-right: 26px; font-size: 15px; }
  .tray > button { margin-left: 25px; }
  .tray .sys { gap: 10px; margin-left: 22px; }
  .tray .lang { font-size: 14px; }
  .tray .clock { display: block; margin-left: 21px; margin-right: -14px; text-align: right; font: 14px/20px "Noto Sans", sans-serif; }
</style>
